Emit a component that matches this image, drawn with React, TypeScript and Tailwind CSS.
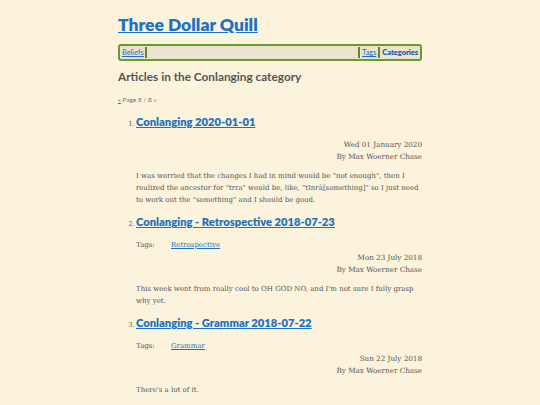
import React from "react";

const serif = { fontFamily: '"DejaVu Serif", serif' } as const;
const sans = { fontFamily: '"Lato", sans-serif' } as const;

function Article(props: { n: number; title: string; tags?: string; date: string; body: React.ReactNode }) {
  return (
    <li className="mb-[8px]">
      <div className="flex items-baseline leading-[15px]">
        <span className="w-[17px] text-[7px] text-[#666] text-right pr-[1px]" style={serif}>{props.n}.</span>
        <a href="#" className="text-[11.2px] font-extrabold text-[#1b72c2] underline" style={sans}>
          {props.title}
        </a>
      </div>
      <div className="pl-[17px]">
        {props.tags && (
          <div className="flex mt-[9px] text-[7px] text-[#555] leading-[9px]" style={serif}>
            <span className="w-[35px]">Tags:</span>
            <a href="#" className="text-[#1b72c2] underline">{props.tags}</a>
          </div>
        )}
        <div className={"text-right text-[7.2px] text-[#555] leading-[12.5px] " + (props.tags ? "mt-[2px]" : "mt-[7px]")} style={serif}>
          <div>{props.date}</div>
          <div>By Max Woerner Chase</div>
        </div>
        <p className="mt-[6px] text-[7px] leading-[12px] text-[#555]" style={serif}>{props.body}</p>
      </div>
    </li>
  );
}

export default function App() {
  return (
    <div className="min-h-[405px] bg-[#fbf3dc]">
      <div className="w-[304px] mx-auto pt-[14px]">
        <h1 className="text-[17.5px] font-extrabold leading-[22px]" style={sans}>
          <a href="#" className="text-[#1b72c2] underline">Three Dollar Quill</a>
        </h1>
        <nav className="mt-[8px] h-[17px] border-2 border-[#6a9a2a] rounded-[3px] bg-[#ebe3cd] flex items-center text-[7.4px]" style={sans}>
          <a href="#" className="pl-[2px] pr-[1px] border-r-2 border-[#5a8a1c] text-[#1b72c2] underline leading-[11px]">Beliefs</a>
          <div className="flex-1" />
          <a href="#" className="px-[2px] border-l-2 border-[#5a8a1c] text-[#1b72c2] underline leading-[11px]">Tags</a>
          <a href="#" className="px-[2px] border-l-2 border-[#5a8a1c] text-[#1b5fa8] font-extrabold leading-[11px]">Categories</a>
        </nav>
        <h2 className="mt-[8px] text-[11.8px] font-bold text-[#555] leading-[16px]" style={sans}>
          Articles in the Conlanging category
        </h2>
        <div className="mt-[10px] text-[6.5px] text-[#777]" style={sans}>
          <a href="#" className="text-[#1b72c2] underline">«</a> Page 8 / 8 »
        </div>
        <ol className="mt-[9px] pl-[1px]">
          <Article
            n={1}
            title="Conlanging 2020-01-01"
            date="Wed 01 January 2020"
            body={<>I was worried that the changes I had in mind would be "not enough", then I realized the ancestor for "trra" would be, like, "tInrā[something]" so I just need to work out the "something" and I should be good.</>}
          />
          <Article
            n={2}
            title="Conlanging - Retrospective 2018-07-23"
            tags="Retrospective"
            date="Mon 23 July 2018"
            body={<>This week went from really cool to OH GOD NO, and I'm not sure I fully grasp why yet.</>}
          />
          <Article
            n={3}
            title="Conlanging - Grammar 2018-07-22"
            tags="Grammar"
            date="Sun 22 July 2018"
            body={<>There's a lot of it.</>}
          />
        </ol>
      </div>
    </div>
  );
}
